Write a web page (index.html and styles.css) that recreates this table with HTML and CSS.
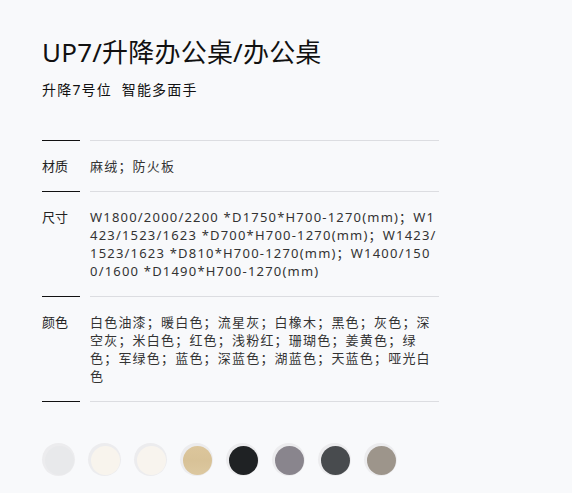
FILE: index.html
```html
<!DOCTYPE html>
<html lang="zh">
<head>
    <meta charset="UTF-8">
    <title>UP7/升降办公桌/办公桌</title>
    <link rel="stylesheet" href="styles.css">
</head>
<body>
    <div class="product">
        <h1 class="title">UP7/升降办公桌/办公桌</h1>
        <p class="subtitle">升降7号位&nbsp; 智能多面手</p>

        <div class="specs">
            <div class="spec-row">
                <div class="spec-label">材质</div>
                <div class="spec-value">麻绒；防火板</div>
            </div>
            <div class="spec-row">
                <div class="spec-label">尺寸</div>
                <div class="spec-value">W1800/2000/2200 *D1750*H700-1270(mm)；W1423/1523/1623 *D700*H700-1270(mm)；W1423/1523/1623 *D810*H700-1270(mm)；W1400/1500/1600 *D1490*H700-1270(mm)</div>
            </div>
            <div class="spec-row">
                <div class="spec-label">颜色</div>
                <div class="spec-value">白色油漆；暖白色；流星灰；白橡木；黑色；灰色；深空灰；米白色；红色；浅粉红；珊瑚色；姜黄色；绿色；军绿色；蓝色；深蓝色；湖蓝色；天蓝色；哑光白色</div>
            </div>
            <div class="spec-end">
                <div class="spec-label"></div>
                <div class="spec-value"></div>
            </div>
        </div>

        <div class="swatches">
            <div class="swatch"><span class="chip chip-white"></span></div>
            <div class="swatch"><span class="chip chip-warm"></span></div>
            <div class="swatch"><span class="chip chip-cream"></span></div>
            <div class="swatch"><span class="chip chip-oak"></span></div>
            <div class="swatch"><span class="chip chip-black"></span></div>
            <div class="swatch"><span class="chip chip-grey"></span></div>
            <div class="swatch"><span class="chip chip-space"></span></div>
            <div class="swatch"><span class="chip chip-taupe"></span></div>
        </div>
    </div>
</body>
</html>
```

FILE: styles.css
```css
body {
    margin: 0;
    background: #f8f9fb;
    font-family: "Noto Sans", "Noto Sans CJK SC", sans-serif;
    color: #222;
}

.product {
    padding: 32px 0 0 42px;
    width: 397px;
}

.title {
    margin: 0;
    font-size: 26px;
    font-weight: normal;
    line-height: 40px;
    letter-spacing: 0.2px;
    color: #111;
}

.subtitle {
    margin: 8px 0 0;
    font-size: 14px;
    line-height: 20px;
    letter-spacing: 1.2px;
    color: #111;
}

.specs {
    margin-top: 40px;
}

.spec-row,
.spec-end {
    display: flex;
    gap: 10px;
}

.spec-label {
    width: 38px;
    flex: none;
    border-top: 1px solid #111;
    padding: 16px 0;
    font-size: 13px;
    line-height: 18px;
    color: #222;
}

.spec-value {
    flex: 1;
    border-top: 1px solid #dcdde1;
    padding: 16px 0;
    font-size: 13px;
    line-height: 18px;
    letter-spacing: 1.2px;
    color: #333;
    word-break: break-all;
}

.spec-end .spec-label,
.spec-end .spec-value {
    padding: 0;
}

/* colour chips */
.swatches {
    display: flex;
    gap: 13px;
    margin-top: 41px;
}

.swatch {
    width: 33px;
    height: 33px;
    border-radius: 50%;
    background: #ececee;
    box-sizing: border-box;
    padding: 3px 1px 1px 3px;
}

.chip {
    display: block;
    width: 29px;
    height: 29px;
    border-radius: 50%;
}

.chip-white { background: #e8e9eb; }
.chip-warm { background: #f8f4ed; }
.chip-cream { background: #f8f4ee; }
.chip-oak { background: linear-gradient(180deg, #dcc69c, #d8c297 50%, #dcc8a0); }
.chip-black { background: #1f2224; }
.chip-grey { background: #89858d; }
.chip-space { background: #484b4e; }
.chip-taupe { background: #9d958b; }
```
